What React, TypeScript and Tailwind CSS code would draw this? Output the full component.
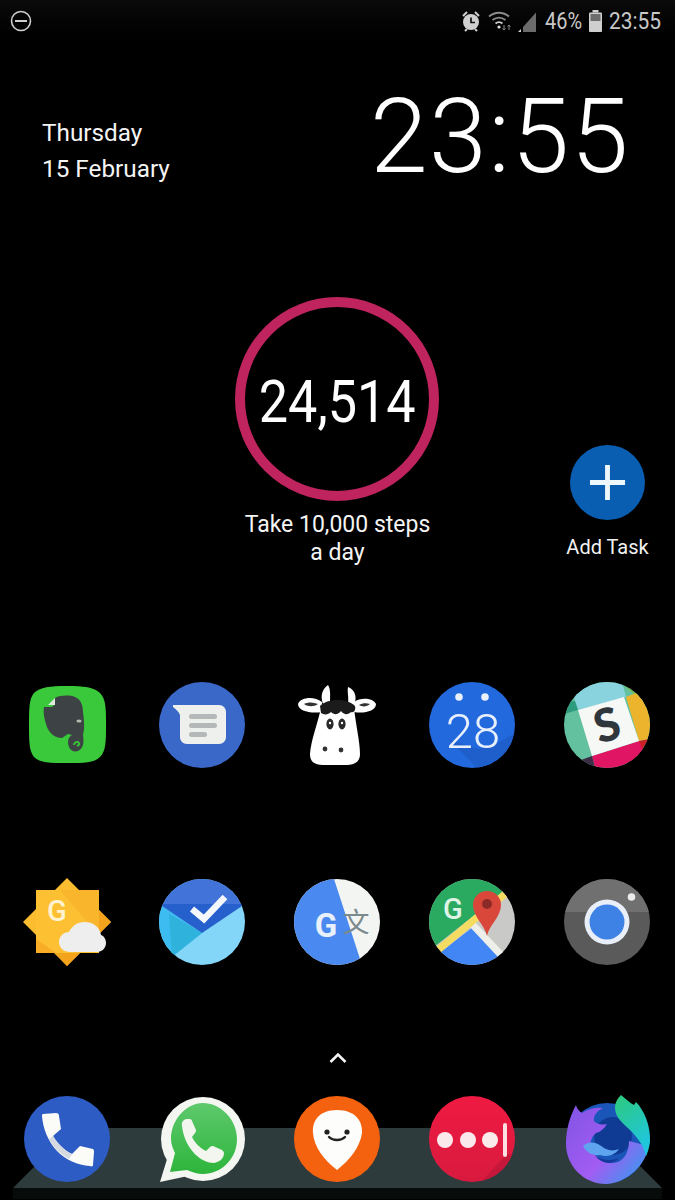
import React from "react";

const roboto = { fontFamily: "Roboto, 'Noto Sans', sans-serif" };

function Icon({ children, className = "" }: { children: React.ReactNode; className?: string }) {
  return (
    <svg viewBox="0 0 86 86" className={"w-[86px] h-[86px] block overflow-visible " + className}>
      {children}
    </svg>
  );
}

function Evernote() {
  return (
    <Icon>
      <path d="M43 4C60 4 70 5 76 11c6 6 6 16 6 32s0 26-6 32c-6 6-16 6-33 6S16 81 10 75C5 69 5 59 5 43s0-26 5-32C16 5 26 4 43 4z" fill="#39c93a" />
      <path d="M31 16C36 13 46 13 51 15c5 2 8 7 8 15 1 8 2 16 0 23 1 7 1 13-5 16-6 2-10-3-10-9 0-4 2-6 4-7l-4-1-6 4C30 56 24 50 22 42c-2-6-3-12-2-17h7c3 0 4-3 4-9z" fill="#3d4344" />
      <path d="M24 23l7-7v7z" fill="#dfeadf" />
      <path d="M50 63c0-3 4-4 5-2 1 2-1 3-2 2" fill="none" stroke="#39c93a" strokeWidth="1.8" />
      <ellipse cx="55" cy="39" rx="2.6" ry="1.5" fill="#aebdae" />
    </Icon>
  );
}

function Messages() {
  return (
    <Icon>
      <circle cx="43" cy="43" r="43" fill="#3a68c9" />
      <path d="M14 23h46c4 0 7 3 7 7v25c0 4-3 7-7 7H28c-4 0-7-3-7-7V33c-1-3-4-6-7-8z" fill="#eef0ee" />
      <rect x="30" y="32" width="28" height="5" rx="2.5" fill="#b5b8b8" />
      <rect x="30" y="41" width="28" height="5" rx="2.5" fill="#b5b8b8" />
      <rect x="30" y="50" width="18" height="5" rx="2.5" fill="#b5b8b8" />
    </Icon>
  );
}

function Cow() {
  return (
    <Icon>
      <path d="M30 24C26 16 27 8 34 3c3 4 2 12 2 19zM54 22c1-7-1-12 0-17 6 2 10 9 6 18z" fill="#fff" />
      <path d="M28 20C20 14 7 15 4 22c0 7 13 10 24 8zM60 20c7-5 19-4 22 2 0 7-12 10-22 8z" fill="#fff" />
      <path d="M10 22c4-2 9-2 14 0-4 3-10 3-14 0zM65 23c3-2 8-2 11-1-3 3-8 3-11 1z" fill="#333" />
      <path d="M27 26c7-4 27-4 33 0 2 18 6 34 6 46 0 8-6 11-13 11H29c-8 0-13-3-13-11 1-14 7-28 11-46z" fill="#fff" />
      <path d="M26 24c6-7 26-9 35 0 1 4-1 7-4 6-3 3-7 3-10-1-3 4-7 4-10 1-3 3-7 3-10 1z" fill="#1b1b1b" />
      <ellipse cx="36" cy="42" rx="3.6" ry="5.4" fill="#2a2a2a" />
      <ellipse cx="48" cy="42" rx="3.6" ry="5.4" fill="#2a2a2a" />
      <circle cx="36" cy="41" r="1.2" fill="#fff" />
      <circle cx="48" cy="41" r="1.2" fill="#fff" />
      <circle cx="31" cy="67" r="2.4" fill="#333" />
      <circle cx="47" cy="68" r="2.4" fill="#333" />
    </Icon>
  );
}

function Calendar() {
  return (
    <Icon>
      <defs>
        <clipPath id="calClip"><circle cx="43" cy="43" r="43" /></clipPath>
      </defs>
      <circle cx="43" cy="43" r="43" fill="#2369de" />
      <g clipPath="url(#calClip)">
        <path d="M19 57l30 10 20-6 17-10v35H48z" fill="#1f5fcc" />
      </g>
      <circle cx="30" cy="15" r="3.8" fill="#e8f0fc" />
      <circle cx="56" cy="15" r="3.8" fill="#e8f0fc" />
      <text x="44" y="66" textAnchor="middle" fontSize="49" fontWeight="300" fill="#e8f0fc" style={roboto}>28</text>
    </Icon>
  );
}

function Slack() {
  return (
    <Icon>
      <defs>
        <clipPath id="slackClip"><circle cx="43" cy="43" r="43" /></clipPath>
      </defs>
      <g clipPath="url(#slackClip)">
        <rect width="86" height="86" fill="#63c1a0" />
        <path d="M8 0h50l4 15-48 13-3-9z" fill="#89d3df" />
        <path d="M56 0h30v26l-16-14z" fill="#78b855" />
        <path d="M62 15l10-4 14 6v40l-11 2z" fill="#ecb32d" />
        <path d="M75 59l11-2v22H66z" fill="#cc2027" />
        <path d="M28 74l47-15 8 20-26 11H32z" fill="#e01563" />
        <path d="M0 20l11-1 3 9-14 4z" fill="#2d9b7d" />
        <path d="M17 78l11-4 4 16H17z" fill="#3e2c46" />
        <path d="M14 28l46-13 15 44-47 15z" fill="#f6f8f5" />
      </g>
      <text x="43" y="59" textAnchor="middle" fontSize="46" fontWeight="900" fill="#2f363c" transform="rotate(-16 43 43)" style={{ fontFamily: "Lato, Roboto, sans-serif" }}>S</text>
    </Icon>
  );
}

function Weather() {
  return (
    <Icon>
      <path d="M43 -1L87 43 43 87 -1 43z" fill="#fbbc2f" />
      <path d="M87 43L43 87 31 74H75V31z" fill="#f4a31d" />
      <rect x="12" y="11" width="63" height="63" fill="#fdc033" />
      <path d="M36 11h39v46z" fill="#f9b62c" />
      <path d="M12 60v14h20z" fill="#f9ac25" />
      <text x="33" y="42" textAnchor="middle" fontSize="29" fontWeight="500" fill="#fff2cf" style={roboto}>G</text>
      <path d="M46 73c-6 0-11-4-11-10s5-10 10-10c3-6 8-10 16-10 9 0 15 6 16 13 3 1 5 4 5 8 0 5-4 9-9 9z" fill="#eeeeee" />
    </Icon>
  );
}

function Inbox() {
  return (
    <Icon>
      <defs>
        <clipPath id="inboxClip"><circle cx="43" cy="43" r="43" /></clipPath>
      </defs>
      <g clipPath="url(#inboxClip)">
        <rect width="86" height="86" fill="#84d6f8" />
        <path d="M0 25l43 29L15 76 0 60z" fill="#3cbcf0" />
        <path d="M10 35l33 19-30 24z" fill="#2fb2dc" />
        <rect width="86" height="25" fill="#4173d9" />
        <path d="M0 25h86L43 54z" fill="#2560cc" />
      </g>
      <path d="M33 30l12 10 21-22" fill="none" stroke="#f4f8fd" strokeWidth="6.5" />
    </Icon>
  );
}

function Translate() {
  return (
    <Icon>
      <defs>
        <clipPath id="trClip"><circle cx="43" cy="43" r="43" /></clipPath>
      </defs>
      <g clipPath="url(#trClip)">
        <rect width="86" height="86" fill="#f3f5f3" />
        <path d="M0 0h40l28 86H0z" fill="#4a8af0" />
      </g>
      <text x="32" y="58" textAnchor="middle" fontSize="33" fontWeight="700" fill="#e8f0fb" style={roboto}>G</text>
      <text x="62" y="53" textAnchor="middle" fontSize="27" fill="#7b8a8c" style={{ fontFamily: "'Noto Sans CJK SC', sans-serif" }}>文</text>
    </Icon>
  );
}

function Maps() {
  return (
    <Icon>
      <defs>
        <clipPath id="mapClip"><circle cx="43" cy="43" r="43" /></clipPath>
      </defs>
      <g clipPath="url(#mapClip)">
        <rect width="86" height="86" fill="#c9c9c7" />
        <path d="M0 0h76v12L0 72z" fill="#2aa961" />
        <path d="M44 48L8 76l12 14h52V78z" fill="#4285f4" />
        <path d="M44 46l28 30" fill="none" stroke="#eeeeea" strokeWidth="7" />
        <path d="M9 71L76 15" fill="none" stroke="#f4dc62" strokeWidth="7" />
      </g>
      <path d="M58 57C56 46 44 38 44 26a14 14 0 0 1 28 0C72 38 60 46 58 57z" fill="#d9473a" />
      <circle cx="58" cy="25" r="5" fill="#8c2a28" />
      <text x="24" y="40" textAnchor="middle" fontSize="29" fontWeight="500" fill="#dff3e6" style={roboto}>G</text>
    </Icon>
  );
}

function Camera() {
  return (
    <Icon>
      <defs>
        <clipPath id="camClip"><rect width="86" height="33" /></clipPath>
      </defs>
      <circle cx="43" cy="43" r="43" fill="#5a5a5a" />
      <circle cx="43" cy="43" r="43" fill="#707070" clipPath="url(#camClip)" />
      <circle cx="43" cy="43" r="22.5" fill="#e9eff8" />
      <circle cx="43" cy="43" r="17.5" fill="#3f82e6" />
      <circle cx="67.5" cy="18" r="3.8" fill="#ececec" />
    </Icon>
  );
}

function Phone() {
  return (
    <Icon>
      <circle cx="43" cy="43" r="43" fill="#2d5cc4" />
      <path d="M19 18l13-1c2 0 3 1 3 3l2 13-8 7c5 8 11 14 19 18l8-8 13 3c1 1 1 2 1 3l-1 13c0 1-1 2-3 1-13-1-24-6-33-15-9-10-14-22-15-35 0-1 0-2 1-2z" fill="#fbfbf8" />
      <path d="M29 40c5 8 11 14 19 18l-3 5c-9-5-16-12-20-20z" fill="#d5d9e0" />
    </Icon>
  );
}

function WhatsApp() {
  return (
    <Icon>
      <defs>
        <linearGradient id="waFill" x1="0" y1="0" x2="0" y2="1">
          <stop offset="0" stopColor="#5ec96d" />
          <stop offset="1" stopColor="#2db53b" />
        </linearGradient>
      </defs>
      <circle cx="44" cy="43" r="42" fill="#f3f6f1" />
      <path d="M1 86l8-26 20 20z" fill="#f3f6f1" />
      <path d="M11 76l5-19c-2-4-4-9-4-14 0-19 15-36 32-36s34 16 34 36-16 35-34 35c-6 0-11-2-16-4z" fill="url(#waFill)" />
      <path d="M23 30c-1-4 2-7 5-7h3c1 0 2 1 2 2l4 9c0 1 0 2-1 3l-3 4c3 6 8 11 14 14l4-4c1-1 2-1 3-1l9 4c1 1 2 2 2 3 0 6-5 9-10 10C40 67 25 50 23 30z" fill="#f2f6ef" />
    </Icon>
  );
}

function Pin() {
  return (
    <Icon>
      <circle cx="43" cy="43" r="43" fill="#f4620f" />
      <path d="M43 14c18 0 26 11 25 23-2 14-12 27-25 37C30 64 20 51 19 37c-1-12 6-23 24-23z" fill="#fdfdfb" />
      <circle cx="33" cy="36" r="2.6" fill="#222" />
      <circle cx="53" cy="36" r="2.6" fill="#222" />
      <path d="M35 41c4 4 12 4 16 0" fill="none" stroke="#222" strokeWidth="2.4" strokeLinecap="round" />
    </Icon>
  );
}

function LastPass() {
  return (
    <Icon>
      <defs>
        <clipPath id="lpClip"><circle cx="43" cy="43" r="43" /></clipPath>
        <linearGradient id="lpFill" x1="0" y1="0" x2="0" y2="1">
          <stop offset="0" stopColor="#ef1a42" />
          <stop offset="1" stopColor="#d81a3e" />
        </linearGradient>
      </defs>
      <circle cx="43" cy="43" r="43" fill="url(#lpFill)" />
      <g clipPath="url(#lpClip)">
        <path d="M78 58L52 86h34V58z" fill="#c5173a" />
      </g>
      <circle cx="16" cy="44" r="8" fill="#fbeaec" />
      <circle cx="39" cy="44" r="8" fill="#fbeaec" />
      <circle cx="61" cy="44" r="8" fill="#fbeaec" />
      <rect x="74" y="27" width="4" height="34" rx="2" fill="#fbdfe3" />
    </Icon>
  );
}

function Firefox() {
  return (
    <Icon>
      <defs>
        <linearGradient id="ffOuter" x1="0" y1="0.1" x2="1" y2="0.9">
          <stop offset="0" stopColor="#8355e6" />
          <stop offset="0.55" stopColor="#a25cf2" />
          <stop offset="1" stopColor="#2f9ff0" />
        </linearGradient>
        <linearGradient id="ffLeaf" x1="0" y1="0" x2="0.5" y2="1">
          <stop offset="0" stopColor="#2ec97b" />
          <stop offset="1" stopColor="#1fc6dc" />
        </linearGradient>
      </defs>
      <circle cx="43" cy="47" r="40" fill="#1a55b8" />
      <circle cx="49" cy="40" r="19" fill="#0f3b95" />
      <path d="M12 9c1 4 3 6 6 8 6-4 13-6 21-5-6 3-10 8-9 13 4 4 8 4 13 3-3 5-7 8-11 9-5 4-7 11-4 17 5 10 15 15 26 12 7-3 11-11 11-21l19 5c0 17-22 38-42 38C20 88 2 70 2 48 2 33 6 20 12 9z" fill="url(#ffOuter)" />
      <path d="M19 50c8-7 16-2 21 2 5 3 10 3 15 1-5 7-12 8-19 6-7 1-13-2-17-9z" fill="#5fa4ee" />
      <path d="M31 60c8 5 17 5 24 2-6 7-16 7-24-2z" fill="#15389b" />
      <path d="M57-1c5 4 9 8 13 10l2-3c8 8 15 24 14 40-1 6-2 10-4 14-2-10-7-16-14-24-8-8-17-14-17-24 0-6 3-10 6-13z" fill="url(#ffLeaf)" />
    </Icon>
  );
}

function Alarm() {
  return (
    <svg viewBox="0 0 20 24" className="w-[20px] h-[24px] block">
      <path d="M2 7l4-4M18 7l-4-4" stroke="#cfcfcf" strokeWidth="2" fill="none" />
      <path d="M4 22l2-2M16 22l-2-2" stroke="#cfcfcf" strokeWidth="2" fill="none" />
      <circle cx="10" cy="13" r="8" fill="#cfcfcf" />
      <path d="M10 8.5V13.5H14" stroke="#111" strokeWidth="1.7" fill="none" />
    </svg>
  );
}

function Wifi() {
  return (
    <svg viewBox="0 0 24 24" className="w-[24px] h-[24px] block">
      <path d="M1 7.5c6-5 14-5 20 0" stroke="#8c8c8c" strokeWidth="1.8" fill="none" />
      <path d="M4.5 11c4-3 9-3 13 0" stroke="#8c8c8c" strokeWidth="1.8" fill="none" />
      <path d="M7.5 14.5c2-1.5 5-1.5 7 0" stroke="#cfcfcf" strokeWidth="1.8" fill="none" />
      <circle cx="11" cy="18" r="1.6" fill="#e0e0e0" />
      <path d="M16 16v5M14.5 19.5l1.5 1.5 1.5-1.5M21 21v-5M19.5 17.5l1.5-1.5 1.5 1.5" stroke="#8c8c8c" strokeWidth="1" fill="none" />
    </svg>
  );
}

function Signal() {
  return (
    <svg viewBox="0 0 20 24" className="w-[20px] h-[24px] block">
      <path d="M0 23l3-3v3z" fill="#d5d5d5" />
      <path d="M5 23v-5L18 3.5V23z" fill="#6b6b6b" />
    </svg>
  );
}

function Battery() {
  return (
    <svg viewBox="0 0 13 22" className="w-[13px] h-[22px] block">
      <rect x="3.5" y="0" width="6" height="2.5" fill="#cfcfcf" />
      <rect x="0" y="2.5" width="13" height="19.5" rx="1" fill="#cfcfcf" />
      <rect x="1.5" y="4" width="10" height="7" fill="#6c6c6c" />
    </svg>
  );
}

const row1 = [Evernote, Messages, Cow, Calendar, Slack];
const row2 = [Weather, Inbox, Translate, Maps, Camera];
const dock = [Phone, WhatsApp, Pin, LastPass, Firefox];

function IconRow({ items, className = "" }: { items: (() => React.ReactElement)[]; className?: string }) {
  return (
    <div className={"grid grid-cols-[repeat(5,135px)] " + className}>
      {items.map((I, i) => (
        <div key={i} className="flex justify-center pr-[1px]">
          <I />
        </div>
      ))}
    </div>
  );
}

export default function App() {
  return (
    <div className="w-[675px] h-[1200px] bg-black text-white overflow-hidden relative flex flex-col" style={roboto}>
      <div className="bg-gradient-to-b from-[#0b0b0b] to-black h-[70px] shrink-0">
        <div className="flex items-center h-[36px] mt-[3px] pl-[10px] pr-[13px]">
          <svg viewBox="0 0 22 22" className="w-[22px] h-[22px] block">
            <circle cx="11" cy="11" r="9.5" fill="none" stroke="#cfcfcf" strokeWidth="1.6" />
            <rect x="5" y="10" width="12" height="2" fill="#cfcfcf" />
          </svg>
          <div className="ml-auto flex items-center text-[#c8c8c8] text-[24px] leading-none">
            <Alarm />
            <div className="ml-[7px]"><Wifi /></div>
            <div className="ml-[6px]"><Signal /></div>
            <span className="ml-[7px] w-[38px] inline-block scale-x-[.83] origin-left whitespace-nowrap">46%</span>
            <div className="ml-[6px]"><Battery /></div>
            <span className="ml-[7px] w-[53px] inline-block scale-x-[.87] origin-left whitespace-nowrap">23:55</span>
          </div>
        </div>
      </div>

      <div className="flex justify-between pl-[42px] pr-[45px] mt-[6px] h-[221px]">
        <div className="text-[24.3px] leading-[36px] text-[#f4f4f4] pt-[39px]">
          <div>Thursday</div>
          <div>15 February</div>
        </div>
        <div className="text-[104px] leading-[122px] font-light tracking-[1.5px]">23:55</div>
      </div>

      <div className="grid grid-cols-[repeat(5,135px)] h-[385px]">
        <div className="col-start-2 col-span-3 flex flex-col items-center">
          <div className="w-[204px] h-[204px] mr-[1px] rounded-full border-[10px] border-[#c0245f] flex items-center justify-center">
            <span className="text-[60px] leading-none pt-[5px] scale-x-[.87] whitespace-nowrap">24,514</span>
          </div>
          <div className="mt-[10px] text-[23px] leading-[28px] text-center text-[#f4f4f4]">
            Take 10,000 steps
            <br />
            a day
          </div>
        </div>
        <div className="flex flex-col items-center pt-[148px]">
          <div className="w-[75px] h-[75px] rounded-full bg-[#0a5eb2] flex items-center justify-center">
            <svg viewBox="0 0 38 38" className="w-[37px] h-[37px] block">
              <path d="M19 1v36M1 19h36" stroke="#eef7fb" strokeWidth="5" />
            </svg>
          </div>
          <div className="mt-[13px] text-[20px] leading-[28px] text-[#f2f2f2]">Add Task</div>
        </div>
      </div>

      <IconRow items={row1} />
      <IconRow items={row2} className="mt-[111px]" />

      <div className="flex justify-center mt-[87px]">
        <svg viewBox="0 0 18 11" className="w-[18px] h-[11px] block">
          <path d="M1.5 10L9 2.5 16.5 10" fill="none" stroke="#f4f4f4" strokeWidth="2.6" />
        </svg>
      </div>

      <div className="relative mt-[33px]">
        <svg viewBox="0 0 675 71" className="absolute left-0 top-[32px] w-[675px] h-[71px] block" preserveAspectRatio="none">
          <path d="M13 60L73 0h529l60 60z" fill="#2e3b3d" />
          <rect x="13" y="60" width="649" height="11" fill="#070c0b" />
        </svg>
        <IconRow items={dock} className="relative" />
      </div>
    </div>
  );
}
